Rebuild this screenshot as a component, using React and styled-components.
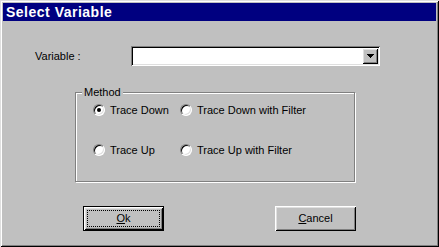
import React from 'react';
import styled, { createGlobalStyle } from 'styled-components';

const GlobalStyle = createGlobalStyle`
  html, body {
    margin: 0;
    padding: 0;
    background: #c0c0c0;
  }
  body {
    font-family: "Liberation Sans", Arial, sans-serif;
    font-size: 11px;
    color: #000;
  }
`;

const raised = `
  box-shadow: inset 1px 1px #fff, inset -1px -1px #000,
    inset 2px 2px #dfdfdf, inset -2px -2px #808080;
`;

export default function App() {
  return (
    <>
      <GlobalStyle />
      <Window>
        <TitleBar>Select Variable</TitleBar>
        <Content>
          <VariableRow>
            <FieldLabel>Variable :</FieldLabel>
            <Combo>
              <DropButton>
                <svg width="7" height="4" viewBox="0 0 7 4">
                  <path d="M0 0h7v1H0zM1 1h5v1H1zM2 2h3v1H2zM3 3h1v1H3z" fill="#000" />
                </svg>
              </DropButton>
            </Combo>
          </VariableRow>

          <Group>
            <Legend>Method</Legend>
            <RadioGrid>
              <RadioItem>
                <Radio><Dot /></Radio>
                Trace Down
              </RadioItem>
              <RadioItem>
                <Radio />
                Trace Down with Filter
              </RadioItem>
              <RadioItem>
                <Radio />
                Trace Up
              </RadioItem>
              <RadioItem>
                <Radio />
                Trace Up with Filter
              </RadioItem>
            </RadioGrid>
          </Group>

          <ButtonRow>
            <Button $default>
              <Focus><u>O</u>k</Focus>
            </Button>
            <Button>
              <Focus $hidden><u>C</u>ancel</Focus>
            </Button>
          </ButtonRow>
        </Content>
      </Window>
    </>
  );
}

const Window = styled.div`
  width: 439px;
  height: 247px;
  box-sizing: border-box;
  padding: 3px;
  display: flex;
  flex-direction: column;
  background: #c0c0c0;
  box-shadow: inset 1px 1px #dfdfdf, inset -1px -1px #000,
    inset 2px 2px #fff, inset -2px -2px #808080;
`;

const TitleBar = styled.div`
  height: 18px;
  display: flex;
  align-items: center;
  padding-left: 3px;
  background: #000080;
  color: #fff;
  font-size: 14px;
  font-weight: bold;
  letter-spacing: 0.5px;
`;

const Content = styled.div`
  display: flex;
  flex-direction: column;
  padding-top: 25px;
`;

const VariableRow = styled.div`
  display: flex;
  align-items: center;
  padding-left: 32px;
`;

const FieldLabel = styled.span`
  width: 96px;
`;

const Combo = styled.div`
  width: 249px;
  height: 20px;
  box-sizing: border-box;
  padding: 2px;
  display: flex;
  justify-content: flex-end;
  background: #fff;
  box-shadow: inset 1px 1px #808080, inset -1px -1px #fff,
    inset 2px 2px #000, inset -2px -2px #dfdfdf;
`;

const DropButton = styled.div`
  width: 16px;
  height: 16px;
  display: flex;
  align-items: center;
  justify-content: center;
  background: #c0c0c0;
  ${raised}
`;

const Group = styled.div`
  position: relative;
  margin: 26px 0 0 72px;
  width: 280px;
  height: 90px;
  box-sizing: border-box;
  padding: 11px 0 0 17px;
  border: 1px solid #808080;
  box-shadow: inset 1px 1px #fff, 1px 1px #fff;
`;

const Legend = styled.span`
  position: absolute;
  top: -7px;
  left: 6px;
  padding: 0 2px 0 2px;
  line-height: 13px;
  background: #c0c0c0;
`;

const RadioGrid = styled.div`
  display: grid;
  grid-template-columns: 87px auto;
  row-gap: 28px;
`;

const RadioItem = styled.label`
  display: flex;
  align-items: center;
  gap: 5px;
  height: 12px;
  line-height: 12px;
  white-space: nowrap;
`;

const Radio = styled.span`
  width: 12px;
  height: 12px;
  box-sizing: border-box;
  display: flex;
  align-items: center;
  justify-content: center;
  border-radius: 50%;
  background: #fff;
  border: 1px solid;
  border-color: #808080 #fff #fff #808080;
  box-shadow: inset 1px 1px #000, inset -1px -1px #dfdfdf;
`;

const Dot = styled.span`
  width: 4px;
  height: 4px;
  border-radius: 50%;
  background: #000;
`;

const ButtonRow = styled.div`
  display: flex;
  gap: 111px;
  margin-top: 24px;
  padding-left: 80px;
`;

const Button = styled.div`
  width: 81px;
  height: 25px;
  box-sizing: border-box;
  padding: 3px;
  display: flex;
  background: #c0c0c0;
  ${raised}
  border: ${(p) => (p.$default ? '1px solid #000' : 'none')};
  ${(p) => !p.$default && 'padding: 4px;'}
`;

const Focus = styled.span`
  flex: 1;
  display: flex;
  align-items: center;
  justify-content: center;
  border: 1px dotted ${(p) => (p.$hidden ? 'transparent' : '#000')};
  padding-bottom: 1px;
`;
